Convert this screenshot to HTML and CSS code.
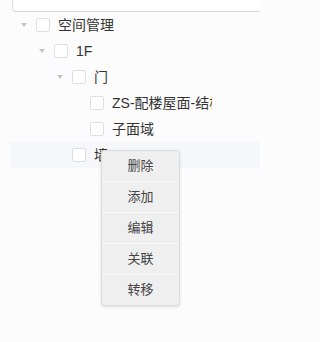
FILE: index.html
```html
<!DOCTYPE html>
<html>
<head>
<meta charset="utf-8">
<link rel="stylesheet" href="styles.css">
</head>
<body>
<div class="topbox"></div>
<div class="tree">
  <div class="row lv1"><span class="arrow"></span><span class="cb"></span><span class="label">空间管理</span></div>
  <div class="row lv2"><span class="arrow"></span><span class="cb"></span><span class="label">1F</span></div>
  <div class="row lv3"><span class="arrow"></span><span class="cb"></span><span class="label">门</span></div>
  <div class="row lv4"><span class="arrow leaf"></span><span class="cb"></span><span class="label clip">ZS-配楼屋面-结构</span></div>
  <div class="row lv4"><span class="arrow leaf"></span><span class="cb"></span><span class="label">子面域</span></div>
  <div class="row lv3 hover"><span class="arrow leaf"></span><span class="cb"></span><span class="label">墙</span></div>
</div>
<div class="menu">
  <div class="item">删除</div>
  <div class="item">添加</div>
  <div class="item">编辑</div>
  <div class="item">关联</div>
  <div class="item">转移</div>
</div>
</body>
</html>
```
FILE: styles.css
```css
html, body {
  margin: 0;
  padding: 0;
}
body {
  width: 260px;
  height: 342px;
  background: #fcfcfc;
  font-family: "Liberation Sans", "Noto Sans CJK SC", sans-serif;
  position: relative;
  overflow: hidden;
}
.topbox {
  margin-left: 12px;
  height: 11px;
  background: #fff;
  border-left: 1px solid #dcdfe6;
  border-bottom: 1px solid #d4d6da;
  border-bottom-left-radius: 4px;
}
.tree {
  margin-left: 10px;
}
.row {
  height: 26px;
  display: flex;
  align-items: center;
  box-sizing: border-box;
}
.row.hover {
  background: #f5f7fa;
}
.lv1 { padding-left: 2px; }
.lv2 { padding-left: 20px; }
.lv3 { padding-left: 38px; }
.lv4 { padding-left: 56px; }
.arrow {
  width: 24px;
  height: 26px;
  position: relative;
  flex: none;
}
.arrow::after {
  content: "";
  position: absolute;
  left: 9px;
  top: 11px;
  border-left: 3px solid transparent;
  border-right: 3px solid transparent;
  border-top: 4px solid #c0c4cc;
}
.arrow.leaf::after {
  display: none;
}
.cb {
  width: 12px;
  height: 12px;
  border: 1px solid #dcdfe6;
  border-radius: 2px;
  background: #fff;
  flex: none;
}
.label {
  margin-left: 8px;
  font-size: 14px;
  color: #333;
  white-space: nowrap;
  line-height: 26px;
}
.label.clip {
  max-width: 100px;
  overflow: hidden;
}
.menu {
  position: absolute;
  left: 101px;
  top: 150px;
  width: 77px;
  background: #efefef;
  border: 1px solid #dcdcdc;
  border-radius: 3px;
  box-shadow: 0 1px 3px rgba(0,0,0,0.12);
}
.item {
  height: 30px;
  line-height: 30px;
  text-align: center;
  font-size: 13px;
  color: #444;
  border-bottom: 1px solid #f9f9f9;
}
.item:last-child {
  border-bottom: none;
}
```
